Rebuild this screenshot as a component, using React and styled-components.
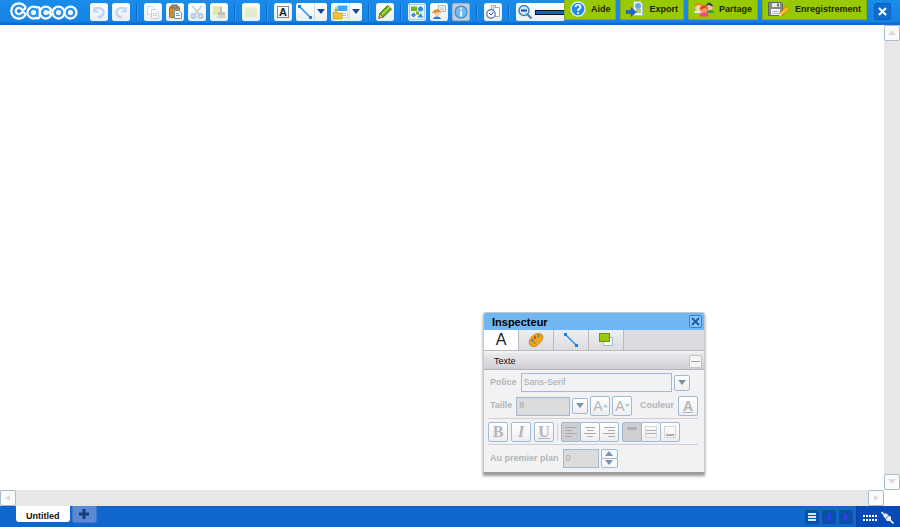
import React, { useState } from 'react'
import styled, { createGlobalStyle } from 'styled-components'

const GlobalStyle = createGlobalStyle`
  * {
    box-sizing: border-box;
  }
  body {
    margin: 0;
    background: #fff;
    overflow: hidden;
    font-family: "Liberation Sans", Arial, sans-serif;
    font-size: 9px;
    line-height: 12px;
  }
  button, input {
    font: inherit;
    margin: 0;
    padding: 0;
    border-radius: 0;
  }
  svg {
    display: block;
    flex: none;
  }
`

const Page = styled.div`
  display: flex;
  flex-direction: column;
  height: 100vh;
`

const Header = styled.header`
  display: flex;
  align-items: flex-start;
  flex: none;
  height: 25px;
  background: linear-gradient(#1a8cea 0px, #1583e5 22px, #0d68c8 23px, #1870cf 25px);
`

const Logo = styled.a`
  flex: none;
  width: 90px;
  padding-left: 9px;
`

const Toolbar = styled.div`
  display: flex;
  flex: 1;
  gap: 4px;
  min-width: 0;
  padding-top: 3px;
  overflow: hidden;
`

const Separator = styled.span`
  flex: none;
  width: 2px;
  height: 18px;
  margin: 0 2px;
  border-left: 1px solid #0f6fd0;
  border-right: 1px solid #2f97ee;
`

const ToolButton = styled.button`
  display: flex;
  align-items: center;
  justify-content: center;
  flex: none;
  width: 18px;
  height: 18px;
  border: 1px solid ${props => props.$active ? '#9db4cb' : '#e6f1fb'};
  border-radius: 2px;
  background: ${props => props.$active ? '#c3cdd8' : 'linear-gradient(#fff, #ebeff3)'};
  & svg {
    opacity: ${props => props.$faded ? 0.35 : 1};
  }
`

const SplitButton = styled.div`
  display: flex;
  flex: none;
  width: 31px;
  height: 18px;
  border-radius: 2px;
  background: linear-gradient(#fff, #ebeff3);
  & button {
    display: flex;
    align-items: center;
    justify-content: center;
    flex: 1;
    border: none;
    background: none;
  }
  & button + button {
    flex: none;
    width: 13px;
    border-left: 1px solid #d3dbe3;
  }
`

const ZoomBox = styled.div`
  display: flex;
  align-items: center;
  flex: 1;
  gap: 2px;
  min-width: 0;
  height: 18px;
  padding-left: 1px;
  overflow: hidden;
  border-radius: 2px 0 0 2px;
  background: linear-gradient(#fff, #ebeff3);
`

const ZoomSlider = styled.input`
  appearance: none;
  flex: none;
  width: 100px;
  height: 5px;
  border: 1px solid #05101f;
  background: #1763c4;
  &::-webkit-slider-thumb {
    appearance: none;
    width: 6px;
    height: 10px;
    background: #fff;
  }
`

const Actions = styled.nav`
  display: flex;
  flex: none;
  gap: 4px;
`

const ActionButton = styled.button`
  display: flex;
  align-items: center;
  gap: 5px;
  height: 20px;
  padding: 0 5px 2px;
  border: 1px solid #7fae08;
  border-top: none;
  background: #98ca02;
  color: #1c2606;
  font-weight: bold;
`

const CloseButton = styled.button`
  display: flex;
  align-items: center;
  justify-content: center;
  flex: none;
  width: 17px;
  height: 17px;
  margin: 3px 9px 0 7px;
  border: 1px solid #0c60bf;
  border-radius: 2px;
  background: #0f6ccc;
`

const Workspace = styled.main`
  display: grid;
  position: relative;
  flex: 1;
  grid-template-columns: 1fr 16px;
  grid-template-rows: 1fr 16px;
  min-height: 0;
`

const Canvas = styled.div`
  background: #fff;
`

const Scrollbar = styled.div`
  display: flex;
  flex-direction: ${props => props.$vertical ? 'column' : 'row'};
  justify-content: space-between;
  background: #e7e7e7;
`

const ScrollButton = styled.button`
  display: flex;
  align-items: center;
  justify-content: center;
  width: 16px;
  height: 16px;
  border: 1px solid #a9bdd2;
  border-radius: 2px;
  background: #fafafa;
`

const Footer = styled.footer`
  display: flex;
  align-items: flex-start;
  flex: none;
  height: 21px;
  background: linear-gradient(#1560bd 0px, #0f69d0 2px, #1065ca 21px);
`

const PageTab = styled.button`
  height: 16px;
  margin-left: 16px;
  padding: 3px 10px 0;
  border: none;
  border-radius: 0 0 3px 3px;
  background: #fff;
  color: #111;
  font-weight: bold;
`

const AddTab = styled.button`
  display: flex;
  align-items: center;
  justify-content: center;
  width: 25px;
  height: 17px;
  margin-left: 2px;
  border: 1px solid #4378cb;
  border-top: none;
  border-radius: 0 0 3px 3px;
  background: #5a8ad6;
`

const PageNav = styled.div`
  display: flex;
  gap: 3px;
  margin-left: auto;
  padding: 4px 3px 0 0;
`

const NavButton = styled.button`
  display: flex;
  align-items: center;
  justify-content: center;
  width: 14px;
  height: 14px;
  border: none;
  border-radius: 2px;
  background: #0b51aa;
`

const Status = styled.div`
  display: flex;
  align-items: center;
  gap: 4px;
  height: 100%;
  padding: 2px 6px 0;
  background: #0649b8;
  border-left: 1px solid #0a3f97;
`

const Panel = styled.section`
  position: absolute;
  right: 195px;
  bottom: 32px;
  width: 222px;
  border: 1px solid #c3c5ca;
  border-bottom: 2px solid #9b9ca0;
  border-radius: 3px 3px 0 0;
  background: #f2f2f5;
  box-shadow: 0 2px 3px rgba(0, 0, 0, 0.4);
`

const PanelTitle = styled.h2`
  display: flex;
  align-items: center;
  justify-content: space-between;
  height: 17px;
  margin: 0;
  padding: 0 2px 0 8px;
  border-radius: 2px 2px 0 0;
  background: #70b6f2;
  color: #000;
  font-size: 11px;
`

const PanelClose = styled.button`
  display: flex;
  align-items: center;
  justify-content: center;
  width: 13px;
  height: 13px;
  border: 1px solid #3d82c4;
  border-radius: 2px;
  background: #8cc6f7;
`

const Tabs = styled.div`
  display: flex;
  height: 21px;
  border-bottom: 1px solid #b9b9be;
  background: #dcdbdf;
`

const Tab = styled.button`
  display: flex;
  align-items: center;
  justify-content: center;
  width: 35px;
  border: none;
  border-right: 1px solid #b9b9be;
  background: ${props => props.$selected ? '#fff' : 'linear-gradient(#eeedf0, #dddce0)'};
`

const SectionTitle = styled.h3`
  display: flex;
  align-items: center;
  justify-content: space-between;
  height: 17px;
  margin: 2px 0 0;
  padding: 0 2px 0 10px;
  border-bottom: 1px solid #b4b4b9;
  background: linear-gradient(#eae9ec, #cfced3);
  color: #111;
  font-size: 9px;
  font-weight: normal;
`

const Collapse = styled.button`
  display: flex;
  align-items: center;
  justify-content: center;
  width: 13px;
  height: 13px;
  border: 1px solid #c2c2c6;
  border-radius: 2px;
  background: #f5f5f6;
`

const Rows = styled.div`
  padding: 1px 6px 0 4px;
`

const Row = styled.div`
  display: flex;
  align-items: center;
  gap: ${props => props.$gap || 2}px;
  height: ${props => props.$height || 23}px;
  padding-right: ${props => props.$inset ? 8 : 0}px;
  border-bottom: ${props => props.$line ? '1px solid #cfcfd3' : 'none'};
`

const Label = styled.label`
  flex: none;
  padding: 0 2px 2px;
  color: #b0b6b9;
  font-weight: bold;
`

const Field = styled.input`
  flex: ${props => props.$width ? 'none' : 1};
  width: ${props => props.$width ? props.$width + 'px' : 'auto'};
  min-width: 0;
  height: 19px;
  padding: 0 2px 2px;
  border: 1px solid #a0b9d4;
  background: ${props => props.$grey ? '#dcdcdd' : '#f2f2f5'};
  color: #a3a9ac;
  outline: none;
`

const Square = styled.button`
  display: flex;
  align-items: center;
  justify-content: center;
  flex: none;
  width: ${props => props.$small ? 16 : 20}px;
  height: ${props => props.$small ? 16 : 20}px;
  border: 1px solid #a0b9d4;
  border-radius: 2px;
  background: ${props => props.$on ? '#cfcfd1' : 'linear-gradient(#fff, #eeeef0)'};
`

const Glyph = styled.span`
  color: #b3b5b9;
  font-size: ${props => props.$serif ? 16 : 14}px;
  line-height: 16px;
  font-family: ${props => props.$serif ? '"Liberation Serif", serif' : 'inherit'};
  font-weight: ${props => props.$bold ? 'bold' : 'normal'};
  font-style: ${props => props.$italic ? 'italic' : 'normal'};
  text-decoration: ${props => props.$underline ? 'underline' : 'none'};
`

const Letter = styled.span`
  color: #222;
  font-size: ${props => props.$small ? 11 : 16}px;
  font-weight: ${props => props.$small ? 'bold' : 'normal'};
`

const LetterBox = styled.span`
  display: flex;
  align-items: center;
  justify-content: center;
  width: 12px;
  height: 12px;
  border: 1px solid #888;
`

const ButtonGroup = styled.div`
  display: flex;
  flex: none;
  & button + button {
    margin-left: -1px;
  }
`

const Divider = styled.span`
  width: 1px;
  height: 18px;
  background: #d3d3d7;
`

const Stepper = styled.div`
  display: flex;
  flex-direction: column;
  & button {
    display: flex;
    align-items: center;
    justify-content: center;
    width: 17px;
    height: 10px;
    border: 1px solid #a0b9d4;
    border-radius: 2px;
    background: #f8f8fa;
  }
  & button + button {
    margin-top: -1px;
  }
`

const Spacer = styled.span`
  flex: 1;
`

const Icon = ({ size = 16, children, ...rest }) => (
  <svg width={size} height={size} viewBox={`0 0 ${size} ${size}`} fill="none" aria-hidden="true" {...rest}>
    {children}
  </svg>
)

const directions = {
  down: 'M0 0H8L4 5Z',
  up: 'M0 5H8L4 0Z',
  left: 'M6 0V6L1 3Z',
  right: 'M2 0V6L7 3Z',
}

const Arrow = ({ direction = 'down', color = '#17479e', width = 8 }) => (
  <svg width={width} height={width * 0.75} viewBox="0 0 8 6" aria-hidden="true">
    <path d={directions[direction]} fill={color} />
  </svg>
)

const Cross = ({ color = '#fff', size = 9 }) => (
  <svg width={size} height={size} viewBox="0 0 9 9" aria-hidden="true">
    <path d="M1 1L8 8M8 1L1 8" stroke={color} strokeWidth="2" />
  </svg>
)

const LogoMark = () => {
  const marks = (
    <>
      <path d="M14 7.500A5.400 5.400 0 1 0 14 14.500" />
      <circle cx="24.500" cy="12.600" r="3.700" />
      <path d="M28.400 9.500V16" />
      <path d="M39.500 10A3.700 3.700 0 1 0 39.500 15.200" />
      <circle cx="49.500" cy="12.600" r="3.700" />
      <circle cx="61.500" cy="12.600" r="3.700" />
    </>
  )
  return (
    <svg width="70" height="22" viewBox="0 0 70 22" fill="none" strokeLinecap="round" role="img" aria-label="Cacoo">
      <g stroke="#fff" strokeWidth="6.800">{marks}</g>
      <g stroke="#2a93ec" strokeWidth="2.400">{marks}</g>
    </svg>
  )
}

const UndoIcon = props => (
  <Icon {...props}>
    <path d="M3 5.500C7 2 13 5 12.500 9C12 12 10 13 7 13" stroke="#5e9de2" strokeWidth="2.400" />
    <path d="M2 2V8.500H8.500Z" fill="#5e9de2" />
  </Icon>
)

const CopyIcon = () => (
  <Icon>
    <path d="M2.500 2.500H7L9 4.500V10.500H2.500Z" fill="#fff" stroke="#8c99a6" />
    <path d="M6.500 5.500H11L13.500 8V14.500H6.500Z" fill="#fff" stroke="#8c99a6" />
    <path d="M8 9.500H12M8 11.500H12" stroke="#8c99a6" />
  </Icon>
)

const PasteIcon = () => (
  <Icon>
    <rect x="2.500" y="2.500" width="10" height="11" rx="1" fill="#c98f2b" stroke="#a3701d" />
    <rect x="5" y="1" width="5" height="3" fill="#999" stroke="#666" />
    <path d="M7.500 6.500H12L14.500 9V14.500H7.500Z" fill="#fff" stroke="#6f93b5" />
    <path d="M9 9.500H12M9 11.500H13" stroke="#6e94bd" />
  </Icon>
)

const CutIcon = () => (
  <Icon>
    <path d="M3.500 2L10.500 11M12.500 2L5.500 11" stroke="#76859a" strokeWidth="1.600" />
    <circle cx="4.500" cy="12" r="2" stroke="#347fd2" strokeWidth="1.800" />
    <circle cx="11.500" cy="12" r="2" stroke="#347fd2" strokeWidth="1.800" />
  </Icon>
)

const BrushIcon = () => (
  <Icon>
    <path d="M2 2H10V11H2Z" fill="#abd51b" />
    <path d="M9 3H11V8H14V11H7V8H9Z" fill="#68614c" />
    <path d="M7 11H14L15 14H5Z" fill="#b2a36a" />
  </Icon>
)

const LineIcon = () => (
  <Icon>
    <path d="M3 3L13 13" stroke="#2292f3" strokeWidth="1.500" />
    <path d="M1 1H4V4H1ZM12 12H15V15H12Z" fill="#1482e8" />
  </Icon>
)

const ImageIcon = () => (
  <Icon>
    <rect x="5.500" y="1.500" width="10" height="12" fill="#fff" stroke="#c5d3dd" />
    <path d="M6 2H15V7H6Z" fill="#42a5f0" />
    <path d="M9 9.500H14M10 11.500H14" stroke="#8cc3ec" />
    <path d="M1 8H5L6 9H10V15H1Z" fill="#f5bf33" stroke="#d9981a" strokeWidth="0.700" />
    <path d="M4 3V7M2.500 5.500L4 7L5.500 5.500" stroke="#52a61c" />
  </Icon>
)

const PencilIcon = () => (
  <Icon>
    <path d="M2 14L3 9L10.500 1.500L14.500 5L7 12.500Z" fill="#73ad16" stroke="#4c800f" />
    <path d="M5 10.500L12.500 3" stroke="#b6e04d" strokeWidth="1.500" />
    <path d="M1.500 14.500L3 10L6.500 13Z" fill="#e7c17b" stroke="#5a4521" strokeWidth="0.600" />
  </Icon>
)

const ShapesIcon = () => (
  <Icon>
    <rect x="0.500" y="0.500" width="15" height="15" fill="#e7f3fd" stroke="#a5cdf0" />
    <rect x="2" y="2.500" width="6" height="4.500" fill="#78b317" />
    <circle cx="11.500" cy="5" r="2.500" fill="#3d8cd8" />
    <path d="M4.500 8.500L7 11L4.500 13.500L2 11Z" fill="#3d8cd8" />
    <path d="M8.500 13.500L11.500 9L14.500 13.500Z" fill="#3d8cd8" />
    <rect x="7" y="7.500" width="3" height="3" fill="#78b317" />
  </Icon>
)

const ChatIcon = () => (
  <Icon>
    <path d="M7.500 1.500H14.500V7.500H11L9 9V7.500H7.500Z" fill="#f2f2f2" stroke="#b4b8bc" />
    <path d="M9 4H13M9 5.500H13" stroke="#babec2" strokeWidth="0.700" />
    <circle cx="6" cy="9" r="3" fill="#f8cda2" />
    <path d="M1 9C3 5 7 4 10 7L7 8.500Z" fill="#e28d18" />
    <path d="M2 15C2.500 11.500 9.500 11.500 10 15Z" fill="#2478d1" />
  </Icon>
)

const InfoIcon = () => (
  <Icon>
    <circle cx="8" cy="8" r="6" fill="#75b7ef" stroke="#3590df" strokeWidth="1.200" />
    <path d="M8 3.500V5.500M8 7V12.500" stroke="#fff" strokeWidth="1.800" />
  </Icon>
)

const HistoryIcon = () => (
  <Icon>
    <path d="M6.500 1.500H10.500V10.500H6.500Z" fill="#eef1f4" stroke="#a5afb9" />
    <path d="M8.500 3.500H14.500V12.500H8.500Z" fill="#fff" stroke="#a5afb9" />
    <circle cx="6" cy="10" r="4.200" fill="#fff" stroke="#6a84b8" strokeWidth="1.400" />
    <path d="M4 9L6 11L8.500 8" stroke="#274d94" />
  </Icon>
)

const MagnifierIcon = () => (
  <Icon>
    <path d="M10 10L14.500 14.500" stroke="#507ba5" strokeWidth="2.200" />
    <circle cx="7" cy="6.500" r="5" fill="#d4eafb" stroke="#337fc5" strokeWidth="1.400" />
    <path d="M4 6.500H10" stroke="#174f99" strokeWidth="1.800" />
  </Icon>
)

const HelpIcon = () => (
  <Icon>
    <circle cx="8" cy="8" r="7" fill="#238be5" stroke="#d3edff" strokeWidth="1.400" />
    <path d="M5.500 6C5.500 3 10.500 3 10.500 6C10.500 8 8 7.500 8 10M8 11.200V13" stroke="#fff" strokeWidth="1.700" />
  </Icon>
)

const ExportIcon = () => (
  <Icon size={18}>
    <path d="M7.500 1.500H14L16.500 4V15.500H7.500Z" fill="#eef7fd" stroke="#a8bfcd" />
    <circle cx="12" cy="6" r="3" fill="#62a9de" />
    <path d="M10 9H15V13H10Z" fill="#a9cc61" />
    <path d="M0 10.500H5V7.500L10.500 12L5 16.500V13.500H0Z" fill="#2464d5" stroke="#174aa4" strokeWidth="0.500" />
  </Icon>
)

const ShareIcon = () => (
  <svg width="20" height="16" viewBox="0 0 20 16" aria-hidden="true">
    <path d="M0 12C0 8 8 8 8 12Z" fill="#d9ebff" />
    <path d="M12 12C12 8 20 8 20 12Z" fill="#3a9742" />
    <circle cx="4.500" cy="6" r="3.300" fill="#ffd1a5" />
    <circle cx="15.500" cy="6" r="3.300" fill="#f8c49a" />
    <path d="M1 6C0 1 7 0 8.500 5L4 4Z" fill="#e98620" />
    <path d="M12 5C12 1 18 0 19 6L15 4Z" fill="#374250" />
    <path d="M5.500 15.500C5 9.500 15 9.500 14.500 15.500Z" fill="#f04a86" />
    <circle cx="10" cy="8.500" r="3.600" fill="#ff8f5c" />
    <path d="M6 9C5 3 15 3 14 9L11.500 6.500Z" fill="#e8392f" />
  </svg>
)

const SaveIcon = () => (
  <svg width="22" height="16" viewBox="0 0 22 16" fill="none" aria-hidden="true">
    <path d="M0.500 1.500H13L14.500 3V14.500H0.500Z" fill="#858a91" stroke="#62666c" />
    <path d="M4 2H12V6H4Z" fill="#e5e8ec" />
    <path d="M9 2.500H11V5.500H9Z" fill="#686e76" />
    <path d="M3 8H12V14H3Z" fill="#f6f6f6" />
    <path d="M4 10.500H11M4 12.500H11" stroke="#b6babd" />
    <path d="M11 15L12 11.500L18.500 5L21.500 8L15 14Z" fill="#f9b91c" stroke="#b56c0b" strokeWidth="0.700" />
    <path d="M11 15.200L12 12L14 14.200Z" fill="#fff0c9" />
  </svg>
)

const PaletteIcon = () => (
  <Icon>
    <path d="M2 13C-1 9 5 1 11 1.500C17 2 15 9 12 10.500C10 12 10 13 9 13.500C7 15 4 15 2 13Z" fill="#eda51d" stroke="#b97808" strokeWidth="0.800" />
    <circle cx="4.500" cy="8.500" r="1.200" fill="#4a76c6" />
    <circle cx="7" cy="5.500" r="1.200" fill="#cb3b27" />
    <circle cx="10.500" cy="4" r="1.200" fill="#529c2e" />
    <circle cx="6.500" cy="11" r="1" fill="#b97808" />
  </Icon>
)

const LayersIcon = () => (
  <Icon>
    <rect x="5.500" y="5.500" width="9" height="8" fill="#fff" stroke="#9abbd5" />
    <rect x="1.500" y="1.500" width="10" height="8" fill="#99ca08" stroke="#69950b" />
  </Icon>
)

const alignPaths = {
  left: 'M2 3.500H14M2 6.500H9M2 9.500H14M2 12.500H9',
  center: 'M3 3.500H13M5 6.500H11M2 9.500H14M5 12.500H11',
  right: 'M3 3.500H14M7 6.500H14M2 9.500H14M7 12.500H14',
}

const AlignIcon = ({ align }) => (
  <Icon><path d={alignPaths[align]} stroke="#a8aaae" /></Icon>
)

const VerticalIcon = ({ align }) => (
  <Icon>
    <rect x="2.500" y="2.500" width="11" height="11" stroke="#d6d6d9" />
    {align === 'middle'
      ? <path d="M3 6.500H13M3 9.500H13" stroke="#adafb3" />
      : <path d={align === 'top' ? 'M3 4.500H13' : 'M4 11H12'} stroke="#adafb3" strokeWidth={align === 'top' ? 3 : 2} />}
  </Icon>
)

const PlugIcon = () => (
  <svg width="13" height="13" viewBox="0 0 13 13" aria-hidden="true">
    <path d="M0.500 1L4 4.500M9 9L12.500 12.500" stroke="#edf1f6" strokeWidth="1.600" />
    <path d="M2 4.500L4.500 2L10 6V10H6Z" fill="#edf1f6" />
    <path d="M4 8.500L9 3.500" stroke="#25467d" strokeWidth="0.800" />
  </svg>
)

const inspectorTabs = [
  { name: 'Texte', icon: <Letter>A</Letter> },
  { name: 'Couleur', icon: <PaletteIcon /> },
  { name: 'Ligne', icon: <LineIcon /> },
  { name: 'Ordre', icon: <LayersIcon /> },
]

function Inspector() {
  const [tab, setTab] = useState(0)
  const [font, setFont] = useState('Sans-Serif')

  return (
    <Panel>
      <PanelTitle>
        Inspecteur
        <PanelClose aria-label="Fermer"><Cross color="#1c5ba5" /></PanelClose>
      </PanelTitle>
      <Tabs>
        {inspectorTabs.map((item, index) => (
          <Tab key={item.name} aria-label={item.name} $selected={tab === index} onClick={() => setTab(index)}>
            {item.icon}
          </Tab>
        ))}
      </Tabs>
      <SectionTitle>
        Texte
        <Collapse aria-label="Réduire">
          <svg width="9" height="3"><path d="M0 1.500H9" stroke="#a0a0a4" /></svg>
        </Collapse>
      </SectionTitle>
      <Rows>
        <Row $inset>
          <Label htmlFor="font">Police</Label>
          <Field id="font" value={font} onChange={e => setFont(e.target.value)} />
          <Square $small aria-label="Choisir la police"><Arrow color="#7893ad" /></Square>
        </Row>
        <Row $line $height={25}>
          <Label htmlFor="size">Taille</Label>
          <Field id="size" $width={54} $grey defaultValue="8" />
          <Square $small aria-label="Choisir la taille"><Arrow color="#7893ad" /></Square>
          <Square aria-label="Agrandir"><Glyph>A</Glyph><Arrow direction="up" color="#a8cbe8" width={5} /></Square>
          <Square aria-label="Rétrécir"><Glyph>A</Glyph><Arrow color="#a8cbe8" width={5} /></Square>
          <Spacer />
          <Label htmlFor="color">Couleur</Label>
          <Square id="color"><Glyph $bold $underline>A</Glyph></Square>
        </Row>
        <Row $line $height={26} $gap={3}>
          <Square aria-label="Gras"><Glyph $serif $bold>B</Glyph></Square>
          <Square aria-label="Italique"><Glyph $serif $bold $italic>I</Glyph></Square>
          <Square aria-label="Souligné"><Glyph $serif $bold $underline>U</Glyph></Square>
          <Divider />
          <ButtonGroup>
            <Square $on aria-label="Gauche"><AlignIcon align="left" /></Square>
            <Square aria-label="Centre"><AlignIcon align="center" /></Square>
            <Square aria-label="Droite"><AlignIcon align="right" /></Square>
          </ButtonGroup>
          <ButtonGroup>
            <Square $on aria-label="Haut"><VerticalIcon align="top" /></Square>
            <Square aria-label="Milieu"><VerticalIcon align="middle" /></Square>
            <Square aria-label="Bas"><VerticalIcon align="bottom" /></Square>
          </ButtonGroup>
        </Row>
        <Row $height={27}>
          <Label htmlFor="front">Au premier plan</Label>
          <Field id="front" $width={36} $grey defaultValue="0" />
          <Stepper>
            <button aria-label="Plus"><Arrow direction="up" color="#7893ad" width={8} /></button>
            <button aria-label="Moins"><Arrow color="#7893ad" width={8} /></button>
          </Stepper>
        </Row>
      </Rows>
    </Panel>
  )
}

export default function App() {
  return (
    <>
      <GlobalStyle />
      <Page>
        <Header>
          <Logo href="#"><LogoMark /></Logo>
          <Toolbar>
            <ToolButton $faded aria-label="Annuler"><UndoIcon /></ToolButton>
            <ToolButton $faded aria-label="Rétablir"><UndoIcon transform="scale(-1 1)" /></ToolButton>
            <Separator />
            <ToolButton $faded aria-label="Copier"><CopyIcon /></ToolButton>
            <ToolButton aria-label="Coller"><PasteIcon /></ToolButton>
            <ToolButton $faded aria-label="Couper"><CutIcon /></ToolButton>
            <ToolButton $faded aria-label="Copier le style"><BrushIcon /></ToolButton>
            <Separator />
            <ToolButton $faded aria-label="Forme"><Icon><rect x="2" y="3" width="12" height="10" rx="2" fill="#c2dc78" stroke="#d7e9a4" /></Icon></ToolButton>
            <Separator />
            <ToolButton aria-label="Texte"><LetterBox><Letter $small>A</Letter></LetterBox></ToolButton>
            <SplitButton>
              <button aria-label="Ligne"><LineIcon /></button>
              <button aria-label="Types de ligne"><Arrow /></button>
            </SplitButton>
            <SplitButton>
              <button aria-label="Image"><ImageIcon /></button>
              <button aria-label="Sources d'image"><Arrow /></button>
            </SplitButton>
            <Separator />
            <ToolButton aria-label="Crayon"><PencilIcon /></ToolButton>
            <Separator />
            <ToolButton aria-label="Stencils"><ShapesIcon /></ToolButton>
            <ToolButton aria-label="Discussion"><ChatIcon /></ToolButton>
            <ToolButton $active aria-label="Inspecteur"><InfoIcon /></ToolButton>
            <Separator />
            <ToolButton aria-label="Historique"><HistoryIcon /></ToolButton>
            <Separator />
            <ZoomBox>
              <MagnifierIcon />
              <ZoomSlider type="range" aria-label="Zoom" defaultValue="100" />
            </ZoomBox>
          </Toolbar>
          <Actions>
            <ActionButton><HelpIcon />Aide</ActionButton>
            <ActionButton><ExportIcon />Export</ActionButton>
            <ActionButton><ShareIcon />Partage</ActionButton>
            <ActionButton><SaveIcon />Enregistrement</ActionButton>
          </Actions>
          <CloseButton aria-label="Fermer"><Cross /></CloseButton>
        </Header>
        <Workspace>
          <Canvas />
          <Scrollbar $vertical>
            <ScrollButton aria-label="Haut"><Arrow direction="up" color="#dcdcdc" /></ScrollButton>
            <ScrollButton aria-label="Bas"><Arrow color="#dcdcdc" /></ScrollButton>
          </Scrollbar>
          <Scrollbar>
            <ScrollButton aria-label="Gauche"><Arrow direction="left" color="#dcdcdc" /></ScrollButton>
            <ScrollButton aria-label="Droite"><Arrow direction="right" color="#dcdcdc" /></ScrollButton>
          </Scrollbar>
          <Inspector />
        </Workspace>
        <Footer>
          <PageTab>Untitled</PageTab>
          <AddTab aria-label="Ajouter une page">
            <svg width="10" height="10"><path d="M5 0V10M0 5H10" stroke="#173e79" strokeWidth="3" /></svg>
          </AddTab>
          <PageNav>
            <NavButton aria-label="Liste des pages">
              <svg width="8" height="8"><path d="M0 1H8M0 4H8M0 7H8" stroke="#d6e6f8" strokeWidth="2" /></svg>
            </NavButton>
            <NavButton aria-label="Page précédente">
              <svg width="6" height="8" fill="none"><path d="M5 1L2 4L5 7" stroke="#3a38ff" strokeWidth="2" /></svg>
            </NavButton>
            <NavButton aria-label="Page suivante">
              <svg width="6" height="8" fill="none"><path d="M1 1L4 4L1 7" stroke="#3a38ff" strokeWidth="2" /></svg>
            </NavButton>
          </PageNav>
          <Status>
            <svg width="14" height="8" fill="none">
              <path d="M0 2H14M0 6H14" stroke="#fff" strokeWidth="2" strokeDasharray="2 1" />
            </svg>
            <PlugIcon />
          </Status>
        </Footer>
      </Page>
    </>
  )
}
